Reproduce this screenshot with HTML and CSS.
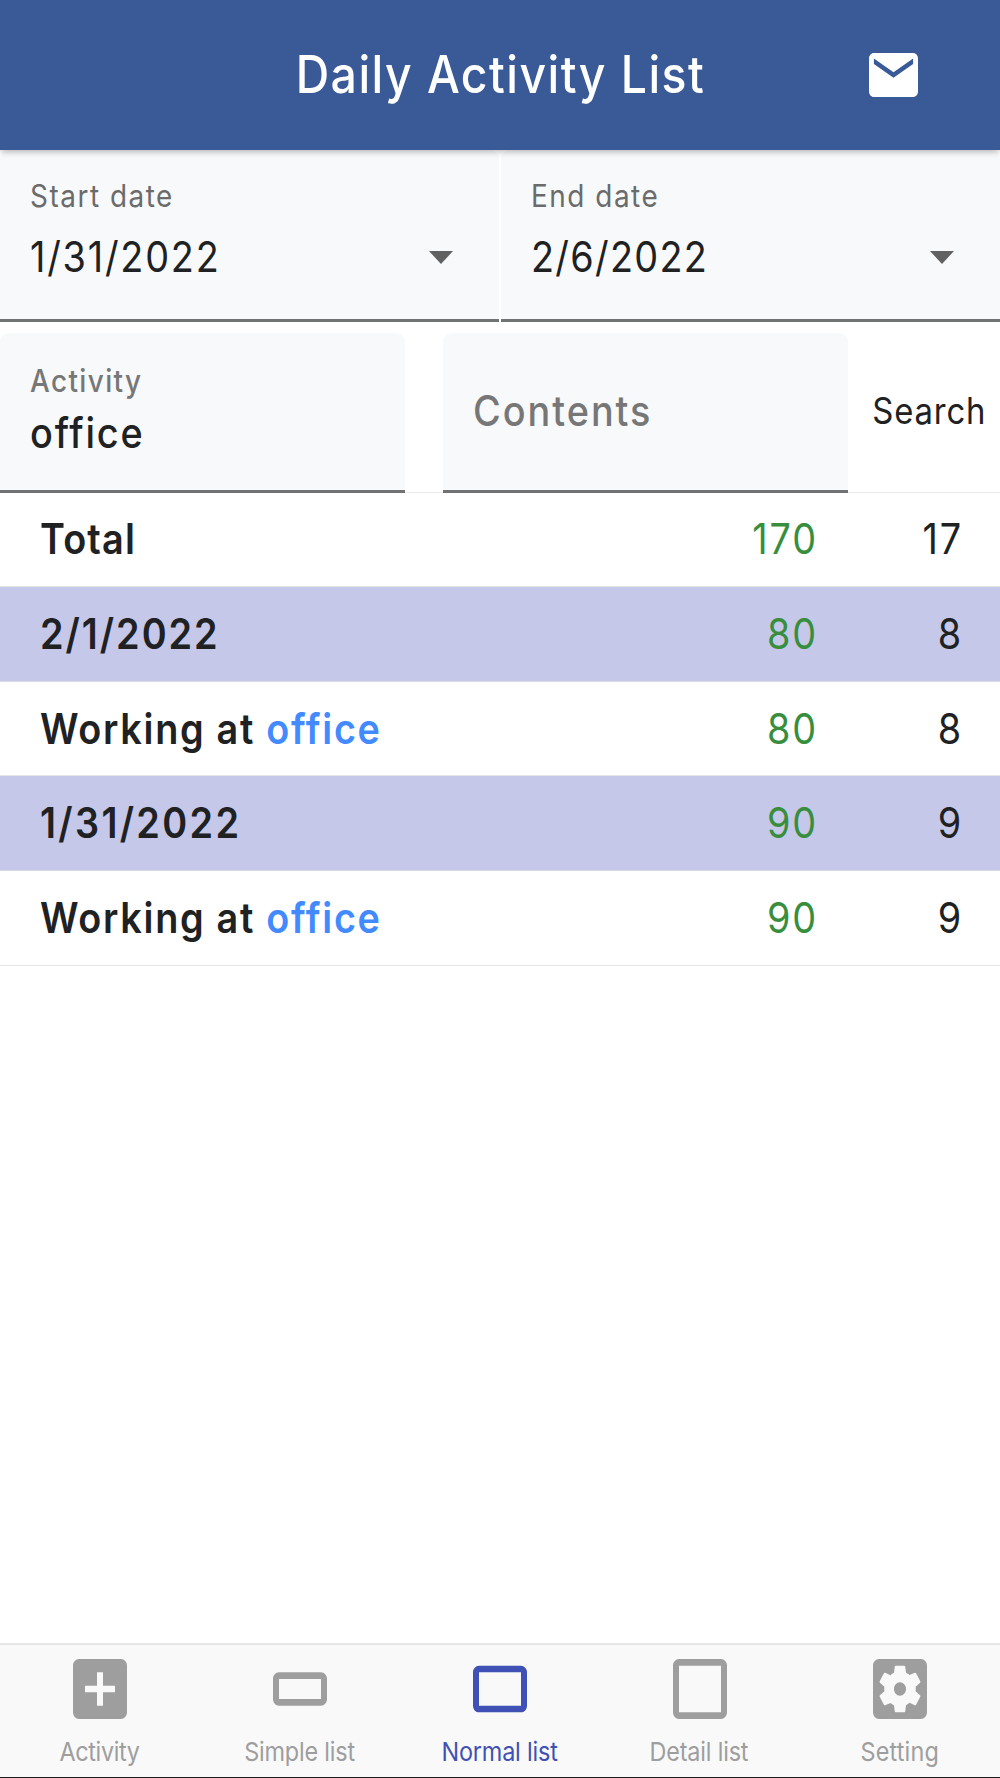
FILE: index.html
```html
<!DOCTYPE html>
<html lang="en">
<head>
<meta charset="utf-8">
<title>Daily Activity List</title>
<link rel="stylesheet" href="styles.css">
</head>
<body>
<div class="app">
  <header class="appbar">
    <h1 class="title">Daily Activity List</h1>
    <svg class="mail" viewBox="2 4 20 16" preserveAspectRatio="none"><path fill="#fff" d="M20 4H4c-1.1 0-1.99.9-1.99 2L2 18c0 1.1.9 2 2 2h16c1.1 0 2-.9 2-2V6c0-1.1-.9-2-2-2zm0 4l-8 5-8-5V6l8 5 8-5v2z"/></svg>
  </header>

  <section class="dates">
    <div class="field date">
      <span class="label">Start date</span>
      <div class="picker"><span class="value">1/31/2022</span><svg class="arrow" viewBox="0 0 10 5" preserveAspectRatio="none"><path d="M0 0h10L5 5z"/></svg></div>
    </div>
    <div class="field date">
      <span class="label">End date</span>
      <div class="picker"><span class="value narrow">2/6/2022</span><svg class="arrow" viewBox="0 0 10 5" preserveAspectRatio="none"><path d="M0 0h10L5 5z"/></svg></div>
    </div>
  </section>

  <section class="filters">
    <div class="field filter">
      <span class="label input-label">Activity</span>
      <span class="value input-value">office</span>
    </div>
    <div class="field filter empty"><span class="value placeholder">Contents</span></div>
    <div class="search"><span class="search-text">Search</span></div>
  </section>

  <main class="list">
    <div class="row"><span class="name total">Total</span><span class="minutes">170</span><span class="count">17</span></div>
    <div class="row day"><span class="name digits short">2/1/2022</span><span class="minutes">80</span><span class="count">8</span></div>
    <div class="row"><span class="name">Working at <span class="match">office</span></span><span class="minutes">80</span><span class="count">8</span></div>
    <div class="row day"><span class="name digits">1/31/2022</span><span class="minutes">90</span><span class="count">9</span></div>
    <div class="row"><span class="name">Working at <span class="match">office</span></span><span class="minutes">90</span><span class="count">9</span></div>
  </main>

  <nav class="tabs">
    <div class="tab">
      <svg class="icon" viewBox="3 3 18 18" preserveAspectRatio="none"><path d="M19 3H5c-1.11 0-2 .9-2 2v14c0 1.1.89 2 2 2h14c1.1 0 2-.9 2-2V5c0-1.1-.9-2-2-2zm-2 10h-4v4h-2v-4H7v-2h4V7h2v4h4v2z"/></svg>
      <span class="tab-label tight">Activity</span>
    </div>
    <div class="tab">
      <svg class="icon" viewBox="3 3 18 18" preserveAspectRatio="none"><path d="M19 7H5c-1.1 0-2 .9-2 2v6c0 1.1.9 2 2 2h14c1.1 0 2-.9 2-2V9c0-1.1-.9-2-2-2zm0 8H5V9h14v6z"/></svg>
      <span class="tab-label">Simple list</span>
    </div>
    <div class="tab active">
      <svg class="icon" viewBox="3 3 18 18" preserveAspectRatio="none"><path d="M19 5H5c-1.1 0-2 .9-2 2v10c0 1.1.9 2 2 2h14c1.1 0 2-.9 2-2V7c0-1.1-.9-2-2-2zm0 12H5V7h14v10z"/></svg>
      <span class="tab-label">Normal list</span>
    </div>
    <div class="tab">
      <svg class="icon" viewBox="3 3 18 18" preserveAspectRatio="none"><path d="M19 3H5c-1.1 0-2 .9-2 2v14c0 1.1.9 2 2 2h14c1.1 0 2-.9 2-2V5c0-1.1-.9-2-2-2zm0 16H5V5h14v14z"/></svg>
      <span class="tab-label">Detail list</span>
    </div>
    <div class="tab">
      <svg class="icon" viewBox="3 3 18 18" preserveAspectRatio="none"><path d="M12 10c-1.1 0-2 .9-2 2s.9 2 2 2 2-.9 2-2-.9-2-2-2zm7-7H5c-1.11 0-2 .9-2 2v14c0 1.1.89 2 2 2h14c1.11 0 2-.9 2-2V5c0-1.1-.89-2-2-2zm-1.75 9c0 .23-.02.46-.05.68l1.48 1.16c.13.11.17.3.08.45l-1.4 2.42c-.09.15-.27.21-.43.15l-1.74-.7c-.36.28-.76.51-1.18.69l-.26 1.85c-.03.17-.18.3-.35.3h-2.8c-.17 0-.32-.13-.35-.29l-.26-1.85c-.43-.18-.82-.41-1.18-.69l-1.74.7c-.16.06-.34 0-.43-.15l-1.4-2.42c-.09-.15-.05-.34.08-.45l1.48-1.16c-.03-.23-.05-.46-.05-.69 0-.23.02-.46.05-.68l-1.48-1.16c-.13-.11-.17-.3-.08-.45l1.4-2.42c.09-.15.27-.21.43-.15l1.74.7c.36-.28.76-.51 1.18-.69l.26-1.85c.03-.17.18-.3.35-.3h2.8c.17 0 .32.13.35.29l.26 1.85c.43.18.82.41 1.18.69l1.74-.7c.16-.06.34 0 .43.15l1.4 2.42c.09.15.05.34-.08.45l-1.48 1.16c.03.23.05.46.05.69z"/></svg>
      <span class="tab-label wide">Setting</span>
    </div>
  </nav>
</div>
</body>
</html>
```
FILE: styles.css
```css
* { box-sizing: border-box; }

body {
  margin: 0;
  background: #fff;
  color: #202122;
  font-family: Inter, "Liberation Sans", sans-serif;
}

.app {
  width: 1000px;
  height: 1778px;
  display: flex;
  flex-direction: column;
  overflow: hidden;
}

/* App bar */
.appbar {
  flex: none;
  height: 149.6px;
  display: grid;
  grid-template-columns: 1fr auto 1fr;
  align-items: center;
  background: #3a5a97;
  box-shadow: 0 1px 7px rgba(0, 0, 0, .34);
  z-index: 1;
}
.title {
  grid-column: 2;
  margin: 0;
  padding: 0 0 1px 1px;
  color: #fff;
  font-size: 51.5px;
  font-weight: 500;
  line-height: 60px;
  letter-spacing: 1.62px;
  white-space: nowrap;
  transform: scaleX(.9);
}
.mail {
  justify-self: end;
  width: 49px;
  height: 44px;
  margin-right: 82px;
}

/* Text is set slightly condensed throughout */
.label, .value, .name {
  display: block;
  white-space: nowrap;
  transform: scaleX(.9);
  transform-origin: left;
}

/* Filled fields */
.field {
  background: #f8f9fb;
  border-bottom: 3px solid #707273;
  border-radius: 9px 9px 0 0;
  padding-left: 30px;
}
.label {
  color: #6b6b6b;
  font-size: 31px;
  line-height: 40px;
  letter-spacing: 1.7px;
}
.value {
  font-size: 42px;
  line-height: 50px;
  letter-spacing: 2px;
}
.narrow { letter-spacing: 1.45px; }

.dates {
  flex: none;
  height: 172.4px;
  display: grid;
  grid-template-columns: 1fr 1fr;
  gap: 2px;
}
.date { padding-top: 26.4px; }
.picker {
  display: flex;
  align-items: center;
  justify-content: space-between;
  margin-top: 16px;
  padding-right: 46px;
}
.arrow { width: 24px; height: 13px; fill: #616161; margin-top: 2px; }

.filters {
  flex: none;
  height: 159.2px;
  margin-top: 11.5px;
  display: grid;
  grid-template-columns: 404.6px 405px 1fr;
  column-gap: 38.4px;
  box-shadow: inset 0 -1px #e9eaea;
}
.filter { padding-top: 27.5px; }
.input-label { color: #777; font-weight: 450; letter-spacing: 1.55px; }
.input-value { font-weight: 450; margin-top: 7px; }
.empty { padding: 0 0 1px 30px; display: flex; align-items: center; }
.placeholder { color: #777; font-weight: 450; letter-spacing: 2.2px; }
.search {
  margin-left: -38px;
  display: flex;
  align-items: center;
  justify-content: center;
  padding: 0 0 4px 11px;
}
.search-text {
  font-size: 36.5px;
  line-height: 44px;
  letter-spacing: .9px;
  transform: scaleX(.9);
}

/* Activity rows */
.row {
  height: 94.6px;
  display: grid;
  grid-template-columns: 1fr 150px 145px;
  align-items: center;
  padding: 0 37.5px 0 40px;
  border-bottom: 1px solid #e4e5e7;
  font-size: 42px;
  line-height: 50px;
}
.day { background: #c5c8e9; border-bottom-color: #d9dbe3; }
.name { font-weight: 600; letter-spacing: 1.88px; }
.total { letter-spacing: 1.3px; }
.digits { letter-spacing: 2.6px; }
.digits.short { letter-spacing: 2.2px; }
.match { color: #448aff; }
.minutes, .count {
  text-align: right;
  letter-spacing: 2.1px;
  transform: scaleX(.9);
  transform-origin: right;
}
.minutes { color: #388e3c; }

/* Bottom tabs */
.tabs {
  flex: none;
  height: 135px;
  margin-top: auto;
  display: grid;
  grid-template-columns: repeat(5, 1fr);
  background: #f9f9f9;
  border-top: 2px solid #e6e6e6;
  border-bottom: 1px solid #1c1c1c;
}
.tab {
  display: flex;
  flex-direction: column;
  align-items: center;
  padding-top: 14px;
  color: #9e9e9e;
}
.active { color: #3f51b5; }
.icon { width: 54px; height: 60px; fill: currentColor; }
.tab-label {
  margin-top: 16.6px;
  padding-right: 1.5px;
  font-size: 26px;
  line-height: 32px;
  letter-spacing: -.2px;
  white-space: nowrap;
  transform: scaleX(.9);
}
.tight { letter-spacing: -.4px; }
.wide { letter-spacing: .2px; }
```
